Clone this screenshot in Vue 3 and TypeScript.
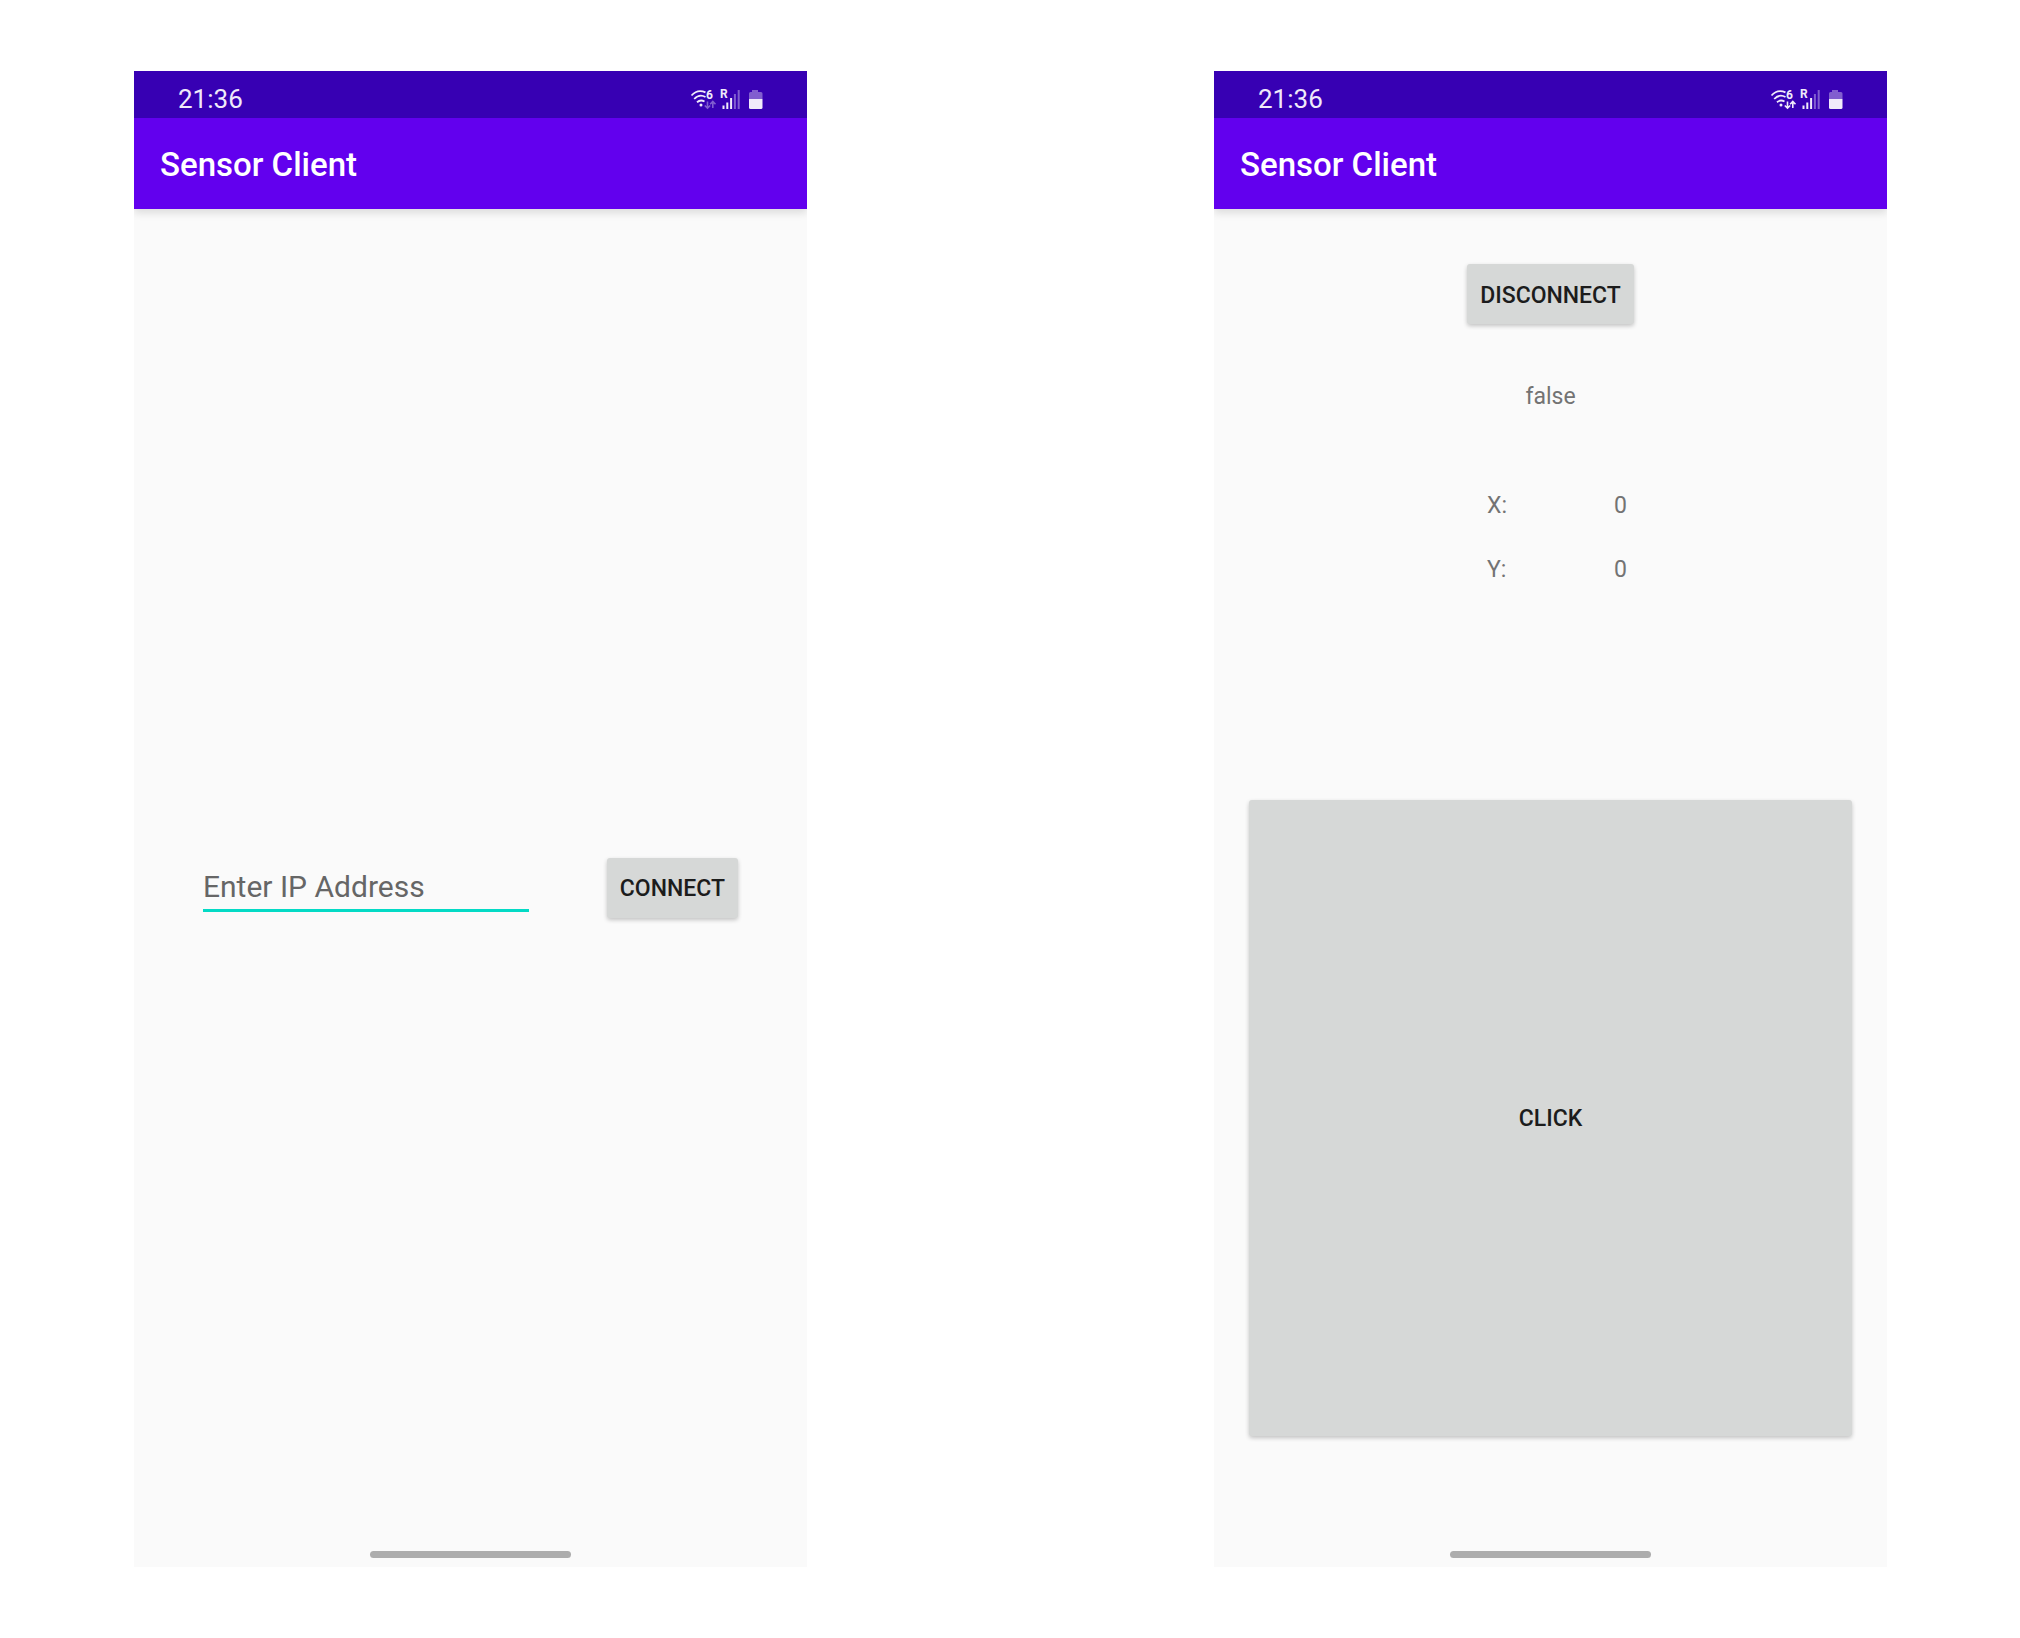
<script setup lang="ts">
import { ref } from 'vue'

const address = ref('')
const pressed = ref(false)
const axes = ref([
  { label: 'X:', value: 0 },
  { label: 'Y:', value: 0 },
])
const screens = [
  { id: 'connect', transferring: false },
  { id: 'control', transferring: true },
]
</script>

<template>
  <main class="page">
    <section v-for="screen in screens" :key="screen.id" class="phone" :class="screen.id">
      <div class="status">
        <time>21:36</time>
        <svg class="indicators" width="75" height="24" viewBox="-1 -1 75 24" aria-hidden="true">
          <g fill="none" stroke="#f0eafa" stroke-width="1.800">
            <path d="M1.500 7.500C5.500 3 11 2.300 15.500 4.400M4.200 11C7.500 7.500 12 7 15.500 9M7 14.200C9.500 12 12 12 14.500 13.500" />
          </g>
          <circle cx="11" cy="17" r="1.500" fill="#f0eafa" />
          <text x="16" y="11" class="glyph">6</text>
          <g
            fill="none"
            stroke="#f0eafa"
            stroke-width="1.600"
            :opacity="screen.transferring ? 1 : 0.4"
          >
            <path d="M17.500 13.500V20M14.800 17.500L17.500 20.200L20.200 17.500M22.800 20V13.500M20.100 16.200L22.800 13.500L25.500 16.200" />
          </g>
          <text x="30" y="10" class="glyph">R</text>
          <g fill="#f0eafa">
            <path d="M32.500 17.500h2v3.500h-2zM36.300 14.500h2v6.500h-2zM40.100 10h2v11h-2z" />
            <path d="M43.900 6h2v15h-2zM47.700 2h2v19h-2z" opacity="0.4" />
            <path d="M62 2h6v2h3q1.500 0 1.500 1.500V11H59V5.500Q59 4 60.500 4H62z" opacity="0.4" />
            <path d="M59 11H72.500V19.500Q72.500 21 71 21H60.500Q59 21 59 19.500z" />
          </g>
        </svg>
      </div>
      <header class="appbar"><h1>Sensor Client</h1></header>

      <form v-if="screen.id === 'connect'" class="body connect-form" @submit.prevent>
        <input v-model="address" type="text" aria-label="Enter IP Address" placeholder="Enter IP Address" />
        <button type="submit">CONNECT</button>
      </form>

      <div v-else class="body controls">
        <button type="button">DISCONNECT</button>
        <p class="state">{{ pressed }}</p>
        <dl>
          <div v-for="axis in axes" :key="axis.label">
            <dt>{{ axis.label }}</dt>
            <dd>{{ axis.value }}</dd>
          </div>
        </dl>
        <button type="button" class="pad" @pointerdown="pressed = true" @pointerup="pressed = false">CLICK</button>
      </div>

      <div class="handle"></div>
    </section>
  </main>
</template>

<style>
body {
  margin: 0;
  background: #fff;
}
</style>

<style scoped>
.page {
  display: grid;
  grid-template-columns: 134fr 673fr 407fr 673fr 133fr;
  align-items: start;
  padding: 71px 0;
  font-family: Roboto, "Liberation Sans", sans-serif;
  font-size: 23px;
  line-height: 28px;
  color: #737373;
}
.phone {
  box-sizing: border-box;
  display: flex;
  flex-direction: column;
  aspect-ratio: 9 / 20;
  background: #fafafa;
}
.connect {
  grid-column: 2;
}
.control {
  grid-column: 4;
}
.status {
  display: flex;
  align-items: center;
  justify-content: space-between;
  box-sizing: border-box;
  height: 47px;
  padding: 8px 43px 0 44px;
  background: #3700b3;
}
time {
  font-size: 26px;
  font-weight: 400;
  color: #f0eafa;
}
.glyph {
  font-size: 12px;
  font-weight: 700;
  fill: #f0eafa;
}
.appbar {
  display: flex;
  align-items: center;
  box-sizing: border-box;
  height: 91px;
  padding: 2px 26px 0;
  background: #6200ee;
  box-shadow: 0 4px 8px rgba(0, 0, 0, 0.12);
  clip-path: inset(0 0 -16px 0);
}
h1 {
  margin: 0;
  font-size: 33px;
  font-weight: 500;
  line-height: 40px;
  color: #fff;
}
.body {
  flex: 1;
  display: flex;
}
.connect-form {
  align-items: center;
  justify-content: space-between;
  padding: 16px 69px 0;
}
input {
  box-sizing: border-box;
  width: 61%;
  height: 48px;
  padding: 0;
  border: 0;
  border-bottom: 3px solid #03dac5;
  background: transparent;
  font: 400 30px/40px Roboto, "Liberation Sans", sans-serif;
  color: #1c1c1c;
  outline: 0;
}
input::placeholder {
  color: #666;
  opacity: 1;
}
button {
  height: 60px;
  padding: 3px 13px 0;
  border: 0;
  border-radius: 3px;
  background: #d6d8d7;
  box-shadow: 0 2px 4px rgba(0, 0, 0, 0.22);
  font: 500 23px/28px Roboto, "Liberation Sans", sans-serif;
  color: #1c1c1c;
}
.controls {
  flex-direction: column;
  align-items: center;
  padding: 55px 35px 0;
}
.state {
  margin: 59px 0 0;
}
dl {
  display: flex;
  flex-direction: column;
  gap: 36px;
  width: 140px;
  margin: 81px 0 0;
  padding-left: 13px;
}
dl div {
  display: flex;
  justify-content: space-between;
}
dd {
  margin: 0;
}
.pad {
  flex: 1;
  width: 100%;
  margin: 216px 0 115px;
}
.handle {
  width: 30%;
  height: 7px;
  margin: 0 auto 9px;
  border-radius: 4px;
  background: #adadad;
}
</style>
